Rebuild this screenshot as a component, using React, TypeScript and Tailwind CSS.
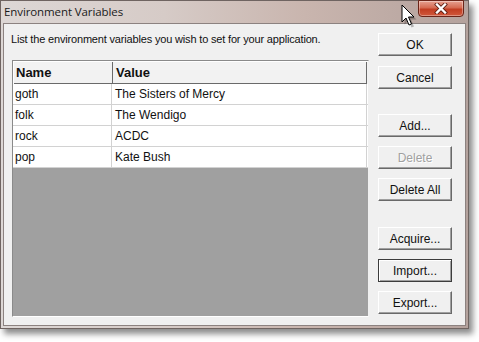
import React from 'react'

const rows = [
  { name: 'goth', value: 'The Sisters of Mercy' },
  { name: 'folk', value: 'The Wendigo' },
  { name: 'rock', value: 'ACDC' },
  { name: 'pop', value: 'Kate Bush' },
]

const Btn = ({ label, disabled, focus }: { label: string; disabled?: boolean; focus?: boolean }) => (
  <div
    className={
      'h-[23px] w-[74px] flex items-center justify-center text-[12px] bg-[#f0f0f0] border ' +
      (focus
        ? 'border-[#3c3c3c] shadow-[inset_1px_1px_0_#ffffff,inset_-1px_-1px_0_#a0a0a0]'
        : 'border-t-[#ffffff] border-l-[#ffffff] border-r-[#696969] border-b-[#696969] shadow-[inset_-1px_-1px_0_#a0a0a0]') +
      (disabled ? ' text-[#a0a0a0] [text-shadow:1px_1px_0_#ffffff]' : ' text-[#111]')
    }
  >
    {label}
  </div>
)

const App = () => {
  return (
    <div className="w-[479px] h-[342px] bg-white relative overflow-hidden" style={{ fontFamily: '"Liberation Sans", Arial, sans-serif' }}>
      {/* window */}
      <div className="w-[469px] h-[329px] flex flex-col border border-[#6f6461] bg-[linear-gradient(90deg,#ddd7d5_0%,#d6cbc7_35%,#c9b5ae_65%,#b4a29d_100%)] shadow-[4px_5px_6px_rgba(0,0,0,0.45)] relative">
        <div className="h-[22px] flex items-center px-[3px] text-[11.5px] text-[#1a1a1a] tracking-[-0.1px]" style={{ fontFamily: '"Open Sans", "Noto Sans", sans-serif' }}>
          Environment Variables
        </div>
        <div className="flex-1 mx-[2px] mb-[2px] bg-[#f0f0f0] border border-[#8c8280] flex pl-[7px] pr-[13px] pt-[7px] pb-[8px] gap-[9px]">
          <div className="flex flex-col flex-1">
            <div className="text-[11px] text-[#111] h-[22px] tracking-[-0.17px]">
              List the environment variables you wish to set for your application.
            </div>
            <div className="mt-[7px] ml-[1px] flex-1 flex flex-col bg-[#a0a0a0] border border-t-[#8a8a8a] border-l-[#8a8a8a] border-r-[#f0f0f0] border-b-[#ffffff]">
              <div className="flex h-[23px] bg-[#f2f2f2] text-[13px] font-bold text-[#111] border-t border-l border-t-[#ffffff] border-l-[#ffffff]">
                <div className="w-[99px] flex items-center pl-[2px] border-r border-b border-r-[#6a6a6a] border-b-[#6a6a6a]">Name</div>
                <div className="flex-1 flex items-center pl-[3px] border-r border-b border-r-[#6a6a6a] border-b-[#6a6a6a] mr-[1px]">Value</div>
              </div>
              {rows.map(r => (
                <div key={r.name} className="flex h-[21px] bg-white text-[12px] text-[#111] border-b border-[#d2d2d2]">
                  <div className="w-[99px] flex items-center pl-[2px] border-r border-[#d2d2d2]">{r.name}</div>
                  <div className="flex-1 flex items-center pl-[3px] border-r border-[#d2d2d2] mr-[1px]">{r.value}</div>
                </div>
              ))}
            </div>
          </div>
          <div className="w-[74px] flex flex-col pt-[2px]">
            <Btn label="OK" />
            <div className="h-[10px]" />
            <Btn label="Cancel" />
            <div className="h-[25px]" />
            <Btn label="Add..." />
            <div className="h-[9px]" />
            <Btn label="Delete" disabled />
            <div className="h-[9px]" />
            <Btn label="Delete All" />
            <div className="h-[26px]" />
            <Btn label="Acquire..." />
            <div className="h-[9px]" />
            <Btn label="Import..." focus />
            <div className="h-[9px]" />
            <Btn label="Export..." />
          </div>
        </div>
        {/* close button */}
        <div className="absolute left-[417px] top-[-1px] w-[46px] h-[17px] rounded-b-[4px] border border-[#6b2418] bg-[linear-gradient(180deg,#e7a191_0%,#d56a52_45%,#c23d22_55%,#d0583c_100%)] shadow-[inset_0_0_0_1px_rgba(255,255,255,0.35)] flex items-center justify-center">
          <svg width="14" height="11" viewBox="0 0 14 11">
            <path d="M3 1.5 L11 9.5 M11 1.5 L3 9.5" stroke="#5a1d12" strokeWidth="4" strokeLinecap="square" />
            <path d="M3 1.5 L11 9.5 M11 1.5 L3 9.5" stroke="#ffffff" strokeWidth="2.4" strokeLinecap="square" />
          </svg>
        </div>
      </div>
      {/* mouse cursor */}
      <svg className="absolute left-[401px] top-[4px]" width="16" height="24" viewBox="0 0 16 24">
        <path d="M2 2 L2 19 L6 15 L9 22 L11.5 21 L8.5 14 L14 14 Z" fill="rgba(0,0,0,0.25)" transform="translate(1.5,1.5)" />
        <path d="M1 1 L1 18 L5 14 L8 21 L10.5 20 L7.5 13 L13 13 Z" fill="#ffffff" stroke="#000000" strokeWidth="1" strokeLinejoin="miter" />
      </svg>
    </div>
  )
}

export default App
